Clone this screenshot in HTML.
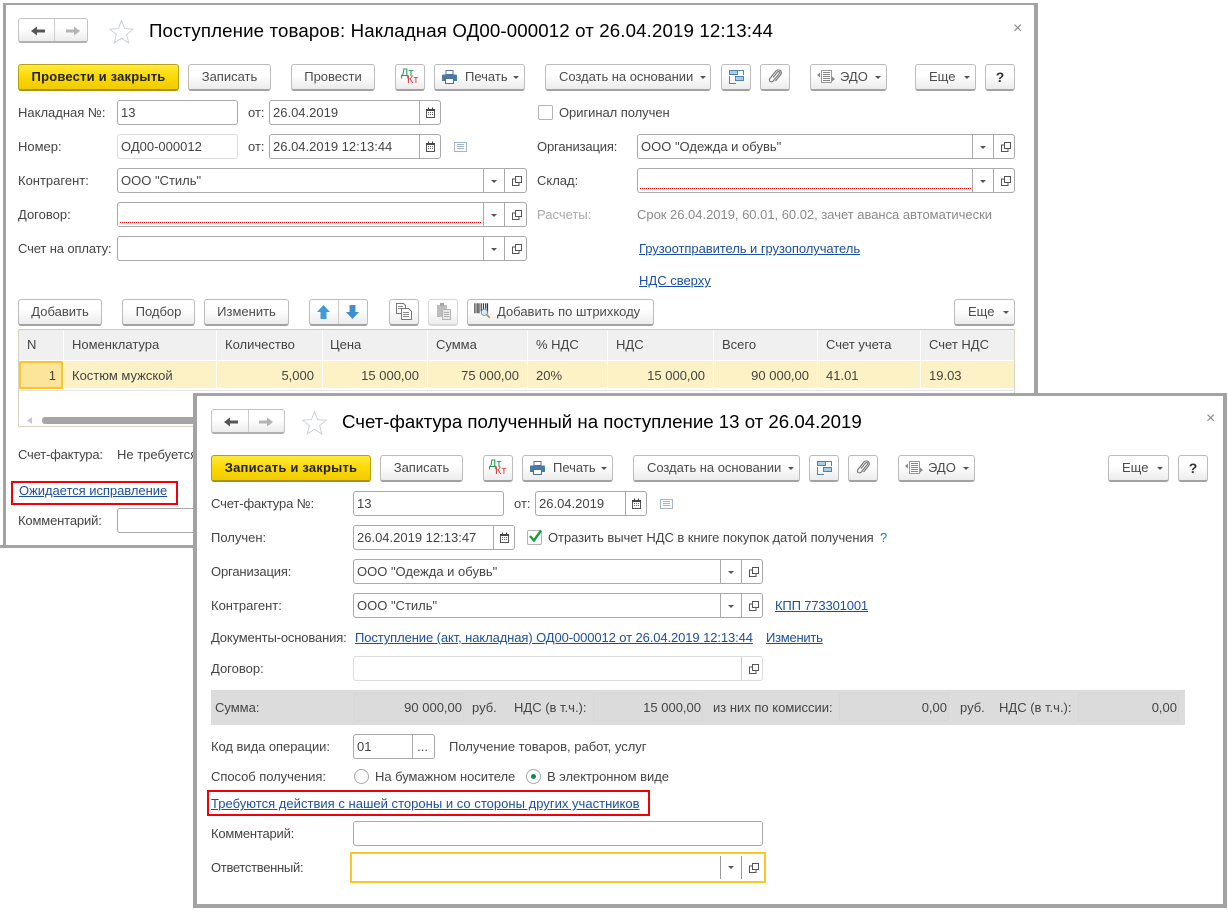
<!DOCTYPE html>
<html lang="ru"><head><meta charset="utf-8"><title>1C</title>
<style>
html,body{margin:0;padding:0;background:#fff}
#p{position:relative;width:1228px;height:912px;overflow:hidden;background:#fff;font:13px/16px "Liberation Sans",Arial,sans-serif;color:#4b4b4b}
#p div,#p a,#p svg{position:absolute;box-sizing:border-box}
.t{white-space:nowrap;line-height:16px;height:16px;margin-top:1px}
.g{color:#444}
a.t{color:#1c4f9f;text-decoration:underline}
.b{height:27px;border:1px solid #bcbcbc;border-bottom:2px solid #a2a2a2;border-radius:3px;background:linear-gradient(#fff,#fff 40%,#ececec);line-height:24px;text-align:center;white-space:nowrap;color:#4b4b4b}
.y{border:1px solid #b59f14;border-bottom:2px solid #a8940f;background:linear-gradient(#ffe93a,#fbd800 55%,#efcb00);font-weight:bold;color:#222;letter-spacing:.2px}
.i{height:25px;border:1px solid #a9a9a9;border-radius:3px;background:#fff;line-height:23px;padding-left:3px;white-space:nowrap;color:#444}
.l{border-color:#dcdcdc}
.v{top:0;bottom:0;width:1px;background:#a9a9a9}
.c{width:0;height:0;border:3px solid transparent;border-top:3px solid #555;border-bottom:0}
.dot{left:2px;bottom:3px;height:1px;background-image:linear-gradient(90deg,#e00 50%,transparent 50%);background-size:2px 1px}
.h{top:330px;height:30px;background:#f0f0f0}
.r{top:361px;height:27px;background:#fdf1c6}
.gf{top:693px;height:28px;background:#dbdbdb;border:1px solid #d7d7d7;color:#444;text-align:right;line-height:28px;padding-right:1px}
.dk{font-size:11px;color:#13934a}
.kt{font-size:11px;color:#e33b3b}
.x{font-size:16px;color:#888;height:18px;line-height:18px}
.ti{height:22px;line-height:22px;font-size:18.67px;color:#000}
</style></head><body><div id="p">
<svg width="0" height="0" style="left:0;top:0">
<defs>
<symbol id="open" viewBox="0 0 11 11"><path d="M4.500 1.500h6v6h-6zM4.500 4H1.500v6.500H8V7.500" fill="none" stroke="#555"/></symbol>
<symbol id="cal" viewBox="0 0 11 11"><path d="M1.500 2.500h8v8h-8z" fill="#fff" stroke="#555"/><path d="M1 2h9v2H1zM3 .5h1v2H3zM7 .5h1v2H7z" fill="#444"/><path d="M3 5h1v1H3zM5 5h1v1H5zM7 5h1v1H7zM3 7h1v1H3zM5 7h1v1H5zM7 7h1v1H7z" fill="#666"/></symbol>
<symbol id="list" viewBox="0 0 13 10"><path d="M.5.500h12v9H.5z" fill="#fbfcfd" stroke="#a5b6c6"/><path d="M3 2.500h7M3 4.500h7M3 6.500h7" stroke="#a5b6c6"/></symbol>
<symbol id="star" viewBox="0 0 24 24"><path d="M12 1.500l3 7.700 8.300.5-6.400 5.300 2.100 8-7-4.500-7 4.500 2.100-8L.7 9.700l8.300-.5z" fill="#fff" stroke="#cfd3d6"/></symbol>
<symbol id="print" viewBox="0 0 15 14"><path d="M4 .500h7v4H4z" fill="#fff" stroke="#54708f"/><path d="M1 4.500h13a1 1 0 0 1 1 1V11h-3V8.500H3V11H0V5.500a1 1 0 0 1 1-1z" fill="#4a7ba6"/><path d="M3.500 8.500h8v5h-8z" fill="#fff" stroke="#54708f"/></symbol>
<symbol id="struct" viewBox="0 0 16 16"><path d="M1.500 1.500h8v4h-8zM7.500 7.500h8v4h-8z" fill="#a9cbe6" stroke="#4b85b5"/><path d="M10 1.500h5.500V6M1.500 7v7.500H8" fill="none" stroke="#4b85b5"/></symbol>
<symbol id="clip" viewBox="0 0 16 18"><path d="M6 9.500l4.500-5.500c1-1.200 2.800.1 1.900 1.400L6.300 13c-1.900 2.300-5.100-.2-3.300-2.600L8.700 3.300c2.800-3.400 7.500.2 4.900 3.400L8.500 13" fill="none" stroke="#7a7a7a" stroke-width="1.200"/></symbol>
<symbol id="edo" viewBox="0 0 18 16"><path d="M4.500 1.500h10v12h-10z" fill="#fff" stroke="#999"/><path d="M6 3.500h7M6 5.500h7M6 7.500h7M6 9.500h7M6 11.500h7" stroke="#888"/><path d="M0 6l3-2.500V8.500zM18 10l-3-2.500v5z" fill="#888"/></symbol>
<symbol id="la" viewBox="0 0 16 12"><path d="M1 6l6-4.500v3h8v3H7v3z" fill="#555"/></symbol>
<symbol id="ra" viewBox="0 0 16 12"><path d="M15 6L9 1.500v3H1v3h8v3z" fill="#b3b3b3"/></symbol>
<symbol id="copy" viewBox="0 0 16 17"><path d="M.5.500h7l2 2v8h-9z" fill="#fff" stroke="#777"/><path d="M5.500 5.500h7l3 3v8h-10z" fill="#fff" stroke="#777"/><path d="M2 3.500h5M2 5.500h3M7 9.500h6M7 11.500h6M7 13.500h6" stroke="#888"/></symbol>
<symbol id="paste" viewBox="0 0 16 17"><path d="M1 2h10v12H1z" fill="#bdbdbd"/><path d="M4 0h4v3H4z" fill="#a5a5a5"/><path d="M6.500 6.500h8v10h-8z" fill="#e6e6e6" stroke="#b5b5b5"/><path d="M8 9.500h5M8 11.500h5M8 13.500h5" stroke="#b5b5b5"/></symbol>
<symbol id="bar" viewBox="0 0 20 18"><path d="M1 1v11M3.500 1v11M5.500 1v11M8 1v9M10.500 1v7M13 1v6M15 1v11" stroke="#333" stroke-width="1.300"/><circle cx="11.500" cy="11" r="3.500" fill="#dbeaf6" stroke="#6a8fb0"/><path d="M14 13.500l3.500 3.500" stroke="#c7933a" stroke-width="2"/></symbol>
</defs></svg>

<!-- ===== WINDOW 1 ===== -->
<div style="left:3px;top:3px;width:1035px;height:545px;background:#fff;border:3px solid #a3a3a3;border-top-width:2px;border-right-width:4px"></div>
<div style="left:0;top:545px;width:200px;height:3px;background:#a3a3a3"></div>

<div class="b" style="left:18px;top:18px;width:70px;height:25px;border-color:#c4c4c4;border-bottom-color:#b0b0b0"></div>
<div style="left:54px;top:19px;width:1px;height:22px;background:#ccc"></div>
<svg style="left:30px;top:25px" width="16" height="12"><use href="#la"/></svg>
<svg style="left:65px;top:25px" width="16" height="12"><use href="#ra"/></svg>
<svg style="left:109px;top:19px" width="25" height="25"><use href="#star"/></svg>
<div class="t ti" style="left:149px;top:19px;letter-spacing:.14px">Поступление товаров: Накладная ОД00-000012 от 26.04.2019 12:13:44</div>
<div class="t x" style="left:1013px;top:19px">×</div>

<div class="b y" style="left:18px;top:64px;width:161px">Провести и закрыть</div>
<div class="b" style="left:188px;top:64px;width:83px">Записать</div>
<div class="b" style="left:291px;top:64px;width:84px">Провести</div>
<div class="b" style="left:395px;top:64px;width:30px"></div>
<div class="t dk" style="left:401px;top:64px">Дт</div>
<div class="t kt" style="left:407px;top:71px">Кт</div>
<div class="b" style="left:434px;top:64px;width:91px;text-align:left;padding-left:30px">Печать</div>
<svg style="left:442px;top:70px" width="15" height="14"><use href="#print"/></svg>
<div class="c" style="left:513px;top:76px"></div>
<div class="b" style="left:545px;top:64px;width:166px;text-align:left;padding-left:13px;letter-spacing:-.03px">Создать на основании</div>
<div class="c" style="left:700px;top:76px"></div>
<div class="b" style="left:721px;top:64px;width:30px"></div>
<svg style="left:728px;top:69px" width="16" height="16"><use href="#struct"/></svg>
<div class="b" style="left:760px;top:64px;width:30px"></div>
<svg style="left:767px;top:68px" width="16" height="18"><use href="#clip"/></svg>
<div class="b" style="left:810px;top:64px;width:77px;text-align:left;padding-left:29px">ЭДО</div>
<svg style="left:817px;top:69px" width="18" height="16"><use href="#edo"/></svg>
<div class="c" style="left:875px;top:76px"></div>
<div class="b" style="left:915px;top:64px;width:61px;text-align:left;padding-left:13px">Еще</div>
<div class="c" style="left:964px;top:76px"></div>
<div class="b" style="left:985px;top:64px;width:30px;font-weight:bold;font-size:14px;color:#333">?</div>

<div class="t g" style="left:18px;top:104px">Накладная №:</div>
<div class="i" style="left:117px;top:100px;width:121px">13</div>
<div class="t g" style="left:248px;top:104px">от:</div>
<div class="i" style="left:269px;top:100px;width:172px">26.04.2019<div class="v" style="right:20px"></div></div>
<svg style="left:425px;top:107px" width="11" height="11"><use href="#cal"/></svg>
<div style="left:538px;top:105px;width:15px;height:15px;border:1px solid #b3b3b3;border-radius:2px"></div>
<div class="t g" style="left:559px;top:104px;letter-spacing:-.05px">Оригинал получен</div>

<div class="t g" style="left:18px;top:138px">Номер:</div>
<div class="i l" style="left:117px;top:134px;width:121px">ОД00-000012</div>
<div class="t g" style="left:248px;top:138px">от:</div>
<div class="i" style="left:269px;top:134px;width:172px">26.04.2019 12:13:44<div class="v" style="right:20px"></div></div>
<svg style="left:425px;top:141px" width="11" height="11"><use href="#cal"/></svg>
<svg style="left:454px;top:142px" width="13" height="10"><use href="#list"/></svg>
<div class="t g" style="left:537px;top:138px;letter-spacing:-.15px">Организация:</div>
<div class="i" style="left:637px;top:134px;width:378px">ООО "Одежда и обувь"<div class="v" style="right:41px"></div><div class="v" style="right:20px"></div><div class="c" style="right:28px;top:11px"></div></div>
<svg style="left:1000px;top:141px" width="11" height="11"><use href="#open"/></svg>

<div class="t g" style="left:18px;top:172px">Контрагент:</div>
<div class="i" style="left:117px;top:168px;width:410px">ООО "Стиль"<div class="v" style="right:42px"></div><div class="v" style="right:21px"></div><div class="c" style="right:29px;top:11px"></div></div>
<svg style="left:511px;top:175px" width="11" height="11"><use href="#open"/></svg>
<div class="t g" style="left:537px;top:172px">Склад:</div>
<div class="i" style="left:637px;top:168px;width:378px"><div class="dot" style="right:43px"></div><div class="v" style="right:41px"></div><div class="v" style="right:20px"></div><div class="c" style="right:28px;top:11px"></div></div>
<svg style="left:1000px;top:175px" width="11" height="11"><use href="#open"/></svg>

<div class="t g" style="left:18px;top:206px">Договор:</div>
<div class="i" style="left:117px;top:202px;width:410px"><div class="dot" style="right:44px"></div><div class="v" style="right:42px"></div><div class="v" style="right:21px"></div><div class="c" style="right:29px;top:11px"></div></div>
<svg style="left:511px;top:209px" width="11" height="11"><use href="#open"/></svg>
<div class="t" style="left:537px;top:206px;color:#aaa">Расчеты:</div>
<div class="t" style="left:637px;top:206px;color:#8a8a8a;letter-spacing:-.02px">Срок 26.04.2019, 60.01, 60.02, зачет аванса автоматически</div>

<div class="t g" style="left:18px;top:240px;letter-spacing:-.13px">Счет на оплату:</div>
<div class="i" style="left:117px;top:236px;width:410px"><div class="v" style="right:42px"></div><div class="v" style="right:21px"></div><div class="c" style="right:29px;top:11px"></div></div>
<svg style="left:511px;top:243px" width="11" height="11"><use href="#open"/></svg>
<a class="t" style="left:639px;top:240px;letter-spacing:-.06px">Грузоотправитель и грузополучатель</a>
<a class="t" style="left:639px;top:272px">НДС сверху</a>

<div class="b" style="left:18px;top:299px;width:84px">Добавить</div>
<div class="b" style="left:122px;top:299px;width:73px">Подбор</div>
<div class="b" style="left:204px;top:299px;width:85px">Изменить</div>
<div class="b" style="left:309px;top:299px;width:59px"></div>
<div style="left:338px;top:300px;width:1px;height:24px;background:#ccc"></div>
<svg style="left:317px;top:305px" width="13" height="14"><path d="M6.500 0L13 7H9.500v7h-6V7H0z" fill="#3f9bd8"/></svg>
<svg style="left:346px;top:305px" width="13" height="14"><path d="M6.500 14L13 7H9.500V0h-6v7H0z" fill="#3f8fd0"/></svg>
<div class="b" style="left:389px;top:299px;width:30px"></div>
<svg style="left:396px;top:303px" width="16" height="17"><use href="#copy"/></svg>
<div class="b" style="left:428px;top:299px;width:30px;border-color:#d8d8d8"></div>
<svg style="left:436px;top:303px" width="16" height="17"><use href="#paste"/></svg>
<div class="b" style="left:467px;top:299px;width:187px;text-align:left;padding-left:29px">Добавить по штрихкоду</div>
<svg style="left:474px;top:302px" width="18" height="17"><use href="#bar"/></svg>
<div class="b" style="left:954px;top:299px;width:61px;text-align:left;padding-left:13px">Еще</div>
<div class="c" style="left:1003px;top:311px"></div>

<!-- table -->
<div style="left:18px;top:329px;width:997px;height:98px;border:1px solid #d8d4c4;background:#fff"></div>
<div style="left:19px;top:329px;width:996px;height:1px;background:#cfcab6"></div>
<div class="h" style="left:19px;width:44px"></div><div class="h" style="left:64px;width:152px"></div><div class="h" style="left:217px;width:105px"></div><div class="h" style="left:323px;width:104px"></div><div class="h" style="left:428px;width:99px"></div><div class="h" style="left:528px;width:79px"></div><div class="h" style="left:608px;width:105px"></div><div class="h" style="left:714px;width:103px"></div><div class="h" style="left:818px;width:102px"></div><div class="h" style="left:921px;width:93px"></div>
<div class="r" style="left:64px;width:152px"></div><div class="r" style="left:217px;width:105px"></div><div class="r" style="left:323px;width:104px"></div><div class="r" style="left:428px;width:99px"></div><div class="r" style="left:528px;width:79px"></div><div class="r" style="left:608px;width:105px"></div><div class="r" style="left:714px;width:103px"></div><div class="r" style="left:818px;width:102px"></div><div class="r" style="left:921px;width:93px"></div>
<div style="left:19px;top:361px;width:44px;height:28px;border:2px solid #f9c62b;background:#fce49a"></div>
<div style="left:19px;top:390px;width:996px;height:1px;background:#e4e4e4"></div>
<div class="t g" style="left:27px;top:336px">N</div>
<div class="t g" style="left:72px;top:336px">Номенклатура</div>
<div class="t g" style="left:225px;top:336px">Количество</div>
<div class="t g" style="left:330px;top:336px">Цена</div>
<div class="t g" style="left:436px;top:336px">Сумма</div>
<div class="t g" style="left:536px;top:336px">% НДС</div>
<div class="t g" style="left:616px;top:336px">НДС</div>
<div class="t g" style="left:722px;top:336px">Всего</div>
<div class="t g" style="left:826px;top:336px">Счет учета</div>
<div class="t g" style="left:929px;top:336px">Счет НДС</div>
<div class="t g" style="left:26px;top:367px;width:30px;text-align:right">1</div>
<div class="t g" style="left:72px;top:367px">Костюм мужской</div>
<div class="t g" style="left:234px;top:367px;width:80px;text-align:right">5,000</div>
<div class="t g" style="left:339px;top:367px;width:80px;text-align:right">15 000,00</div>
<div class="t g" style="left:439px;top:367px;width:80px;text-align:right">75 000,00</div>
<div class="t g" style="left:536px;top:367px">20%</div>
<div class="t g" style="left:625px;top:367px;width:80px;text-align:right">15 000,00</div>
<div class="t g" style="left:729px;top:367px;width:80px;text-align:right">90 000,00</div>
<div class="t g" style="left:826px;top:367px">41.01</div>
<div class="t g" style="left:929px;top:367px">19.03</div>
<svg style="left:27px;top:417px" width="6" height="7"><path d="M0 3.500L5 0v7z" fill="#c8c8c8"/></svg>
<div style="left:42px;top:417px;width:300px;height:7px;border-radius:3px;background:#a5a5a5"></div>

<div class="t g" style="left:18px;top:446px;letter-spacing:-.2px">Счет-фактура:</div>
<div class="t g" style="left:117px;top:446px">Не требуется</div>
<div style="left:11px;top:481px;width:167px;height:24px;border:2px solid #f00008"></div>
<a class="t" style="left:19px;top:482px;letter-spacing:-.04px">Ожидается исправление</a>
<div class="t g" style="left:18px;top:512px;letter-spacing:-.15px">Комментарий:</div>
<div class="i" style="left:117px;top:508px;width:100px"></div>

<!-- ===== WINDOW 2 ===== -->
<div style="left:193px;top:393px;width:1034px;height:515px;background:#fff;border:3px solid #a3a3a3;border-left-width:4px;border-right-width:4px;border-bottom-width:4px"></div>

<div class="b" style="left:211px;top:409px;width:74px;height:25px;border-color:#c4c4c4;border-bottom-color:#b0b0b0"></div>
<div style="left:248px;top:410px;width:1px;height:22px;background:#ccc"></div>
<svg style="left:223px;top:416px" width="16" height="12"><use href="#la"/></svg>
<svg style="left:258px;top:416px" width="16" height="12"><use href="#ra"/></svg>
<svg style="left:302px;top:410px" width="25" height="25"><use href="#star"/></svg>
<div class="t ti" style="left:342px;top:410px">Счет-фактура полученный на поступление 13 от 26.04.2019</div>
<div class="t x" style="left:1206px;top:409px">×</div>

<div class="b y" style="left:211px;top:455px;width:160px">Записать и закрыть</div>
<div class="b" style="left:380px;top:455px;width:83px">Записать</div>
<div class="b" style="left:483px;top:455px;width:30px"></div>
<div class="t dk" style="left:489px;top:455px">Дт</div>
<div class="t kt" style="left:495px;top:462px">Кт</div>
<div class="b" style="left:522px;top:455px;width:91px;text-align:left;padding-left:30px">Печать</div>
<svg style="left:530px;top:461px" width="15" height="14"><use href="#print"/></svg>
<div class="c" style="left:601px;top:467px"></div>
<div class="b" style="left:633px;top:455px;width:167px;text-align:left;padding-left:13px;letter-spacing:-.03px">Создать на основании</div>
<div class="c" style="left:788px;top:467px"></div>
<div class="b" style="left:809px;top:455px;width:30px"></div>
<svg style="left:816px;top:460px" width="16" height="16"><use href="#struct"/></svg>
<div class="b" style="left:848px;top:455px;width:30px"></div>
<svg style="left:855px;top:459px" width="16" height="18"><use href="#clip"/></svg>
<div class="b" style="left:898px;top:455px;width:77px;text-align:left;padding-left:29px">ЭДО</div>
<svg style="left:905px;top:460px" width="18" height="16"><use href="#edo"/></svg>
<div class="c" style="left:963px;top:467px"></div>
<div class="b" style="left:1108px;top:455px;width:61px;text-align:left;padding-left:13px">Еще</div>
<div class="c" style="left:1157px;top:467px"></div>
<div class="b" style="left:1178px;top:455px;width:30px;font-weight:bold;font-size:14px;color:#333">?</div>

<div class="t g" style="left:211px;top:495px;letter-spacing:-.13px">Счет-фактура №:</div>
<div class="i" style="left:353px;top:491px;width:151px">13</div>
<div class="t g" style="left:514px;top:495px">от:</div>
<div class="i" style="left:535px;top:491px;width:112px">26.04.2019<div class="v" style="right:20px"></div></div>
<svg style="left:631px;top:498px" width="11" height="11"><use href="#cal"/></svg>
<svg style="left:660px;top:499px" width="13" height="10"><use href="#list"/></svg>

<div class="t g" style="left:211px;top:529px">Получен:</div>
<div class="i" style="left:353px;top:525px;width:162px">26.04.2019 12:13:47<div class="v" style="right:20px"></div></div>
<svg style="left:499px;top:532px" width="11" height="11"><use href="#cal"/></svg>
<div style="left:527px;top:530px;width:15px;height:15px;border:1px solid #b3b3b3;border-radius:2px"></div>
<svg style="left:528px;top:529px" width="15" height="14"><path d="M2 7l4 4.500L13 1.500" fill="none" stroke="#14a03c" stroke-width="2.400"/></svg>
<div class="t g" style="left:548px;top:529px;letter-spacing:-.06px">Отразить вычет НДС в книге покупок датой получения</div>
<div class="t" style="left:880px;top:529px;color:#1d77b5">?</div>

<div class="t g" style="left:211px;top:563px;letter-spacing:-.15px">Организация:</div>
<div class="i" style="left:353px;top:559px;width:410px">ООО "Одежда и обувь"<div class="v" style="right:41px"></div><div class="v" style="right:20px"></div><div class="c" style="right:28px;top:11px"></div></div>
<svg style="left:748px;top:566px" width="11" height="11"><use href="#open"/></svg>

<div class="t g" style="left:211px;top:597px">Контрагент:</div>
<div class="i" style="left:353px;top:593px;width:410px">ООО "Стиль"<div class="v" style="right:41px"></div><div class="v" style="right:20px"></div><div class="c" style="right:28px;top:11px"></div></div>
<svg style="left:748px;top:600px" width="11" height="11"><use href="#open"/></svg>
<a class="t" style="left:775px;top:597px;letter-spacing:-.15px">КПП 773301001</a>

<div class="t g" style="left:211px;top:629px;letter-spacing:-.15px">Документы-основания:</div>
<a class="t" style="left:355px;top:629px;letter-spacing:-.1px">Поступление (акт, накладная) ОД00-000012 от 26.04.2019 12:13:44</a>
<a class="t" style="left:766px;top:629px;letter-spacing:-.25px">Изменить</a>

<div class="t g" style="left:211px;top:660px">Договор:</div>
<div class="i l" style="left:353px;top:656px;width:410px"><div class="v" style="right:20px;background:#ccc"></div></div>
<svg style="left:748px;top:663px" width="11" height="11"><use href="#open"/></svg>

<div style="left:211px;top:690px;width:974px;height:35px;background:#dcdcdc"></div>
<div class="t g" style="left:215px;top:699px">Сумма:</div>
<div class="gf" style="left:354px;width:110px">90 000,00</div>
<div class="t g" style="left:472px;top:699px">руб.</div>
<div class="t g" style="left:514px;top:699px">НДС (в т.ч.):</div>
<div class="gf" style="left:593px;width:110px">15 000,00</div>
<div class="t g" style="left:713px;top:699px">из них по комиссии:</div>
<div class="gf" style="left:839px;width:110px">0,00</div>
<div class="t g" style="left:960px;top:699px">руб.</div>
<div class="t g" style="left:999px;top:699px">НДС (в т.ч.):</div>
<div class="gf" style="left:1078px;width:101px">0,00</div>

<div class="t g" style="left:211px;top:738px;letter-spacing:-.05px">Код вида операции:</div>
<div class="i" style="left:353px;top:734px;width:82px">01<div class="v" style="right:21px"></div><div class="t" style="right:6px;top:3px">...</div></div>
<div class="t g" style="left:449px;top:738px">Получение товаров, работ, услуг</div>

<div class="t g" style="left:211px;top:768px;letter-spacing:-.05px">Способ получения:</div>
<div style="left:354px;top:769px;width:15px;height:15px;border:1px solid #a9a9a9;border-radius:50%"></div>
<div class="t g" style="left:375px;top:768px;letter-spacing:-.05px">На бумажном носителе</div>
<div style="left:526px;top:769px;width:15px;height:15px;border:1px solid #a9a9a9;border-radius:50%"></div>
<div style="left:531px;top:774px;width:5px;height:5px;background:#0c8a4a;border-radius:50%"></div>
<div class="t g" style="left:547px;top:768px;letter-spacing:-.05px">В электронном виде</div>

<div style="left:207px;top:790px;width:443px;height:26px;border:2px solid #f00008"></div>
<a class="t" style="left:211px;top:795px;letter-spacing:.02px">Требуются действия с нашей стороны и со стороны других участников</a>

<div class="t g" style="left:211px;top:825px;letter-spacing:-.2px">Комментарий:</div>
<div class="i" style="left:353px;top:821px;width:410px"></div>

<div class="t g" style="left:211px;top:859px;letter-spacing:-.3px">Ответственный:</div>
<div style="left:350px;top:852px;width:416px;height:31px;border:2px solid #f9c62b;background:#fff"></div>
<div style="left:720px;top:856px;width:1px;height:23px;background:#999"></div>
<div style="left:741px;top:856px;width:1px;height:23px;background:#999"></div>
<div class="c" style="left:728px;top:866px"></div>
<svg style="left:748px;top:862px" width="11" height="11"><use href="#open"/></svg>
</div></body></html>
